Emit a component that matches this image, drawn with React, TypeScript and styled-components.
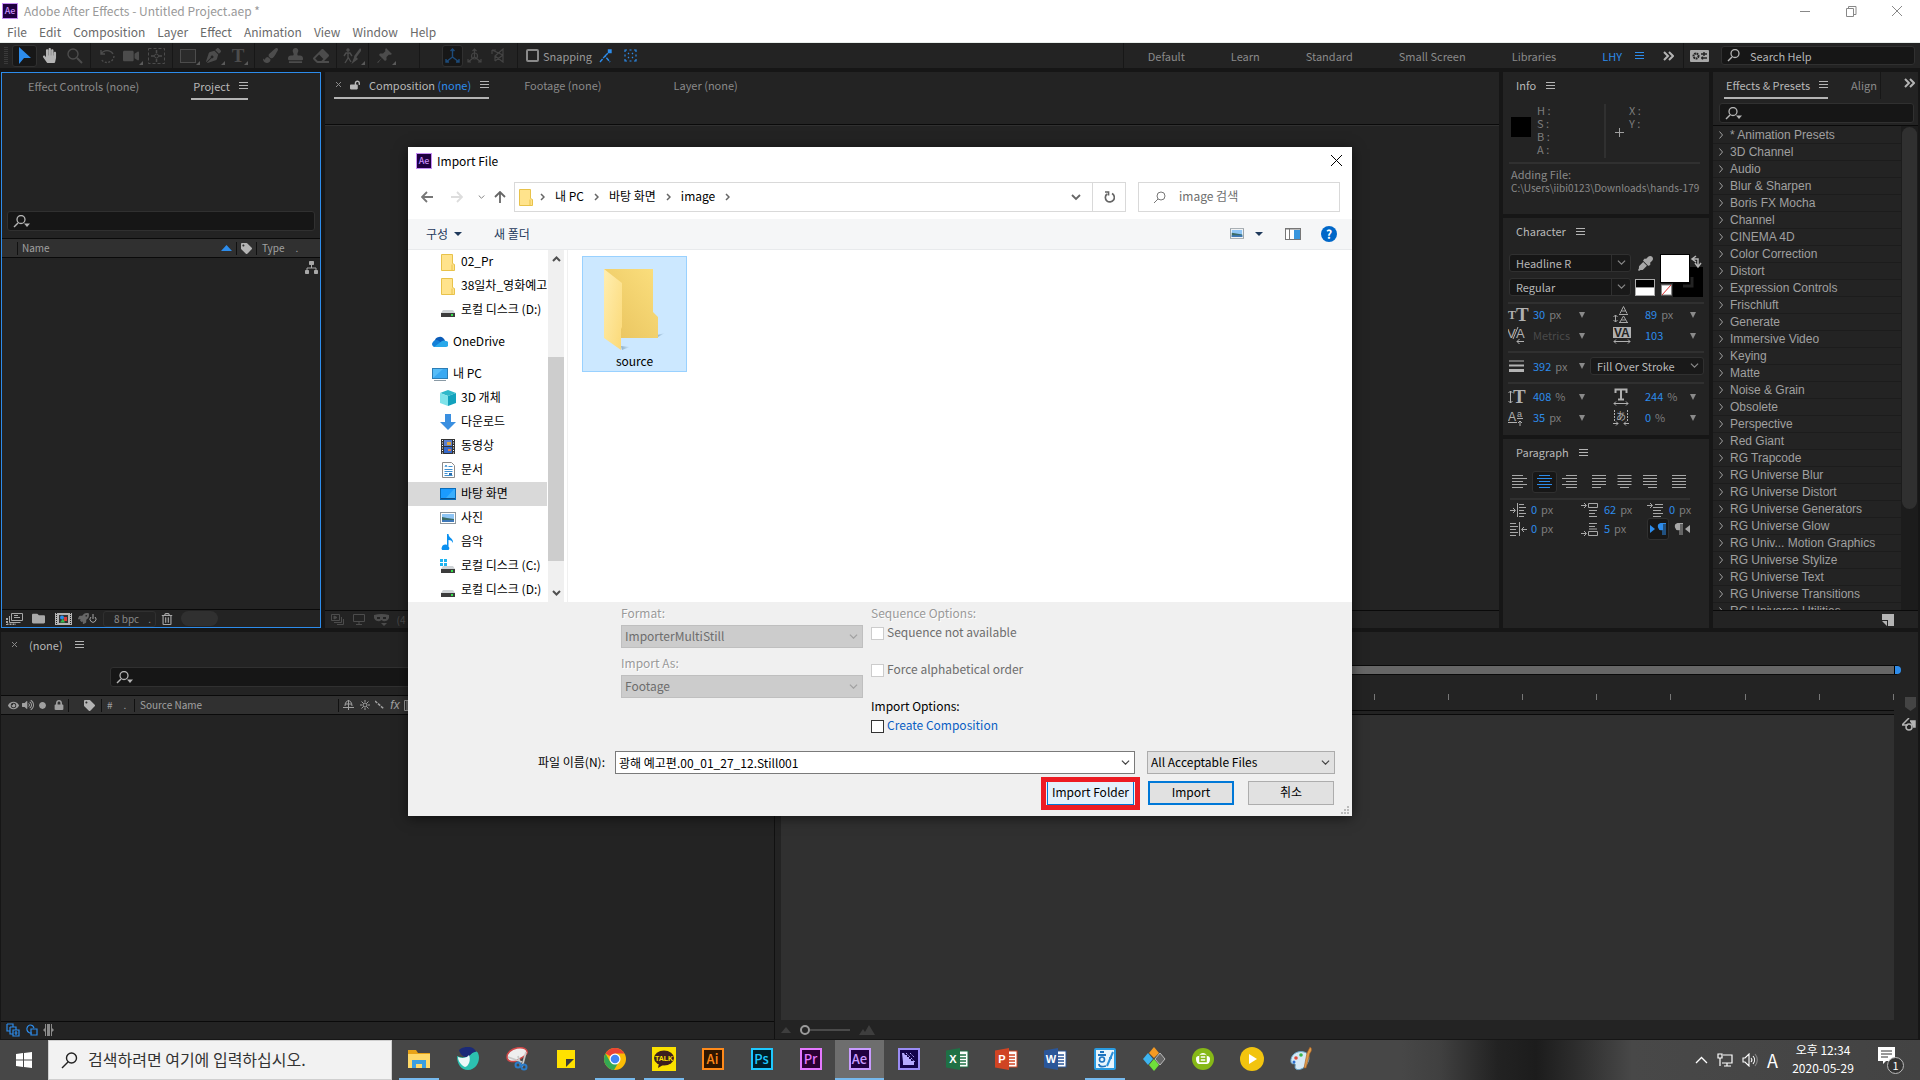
import React from "react";
import styled, { createGlobalStyle, css } from "styled-components";
import {
  FaHandPaper, FaPenNib, FaPaintBrush, FaStamp, FaEraser, FaTag,
  FaRegTrashAlt, FaEyeDropper, FaVideo, FaFolder, FaRocket, FaEye, FaVolumeUp, FaLock, FaLockOpen, FaCircle,
} from "react-icons/fa";

const UI = `"Noto Sans CJK KR", "Noto Sans", sans-serif`;
const BLUE = "#2d8ceb";

const Global = createGlobalStyle`
  *, *::before, *::after { box-sizing: border-box; }
  body { margin: 0; background: #161616; font-family: ${UI}; font-size: 12px; line-height: 16px; color: #999; overflow: hidden; }
  button, input, select { font: inherit; color: inherit; margin: 0; padding: 0; border: 0; background: none; border-radius: 0; }
  button { cursor: default; white-space: nowrap; }
  input, select { appearance: none; outline: none; min-width: 0; }
  ul { list-style: none; margin: 0; padding: 0; }
  svg { display: block; flex: none; }
  a { color: inherit; text-decoration: none; }
`;

/* ---------- shared pieces ---------- */

const Desktop = styled.div`
  height: 100vh;
  display: flex;
  flex-direction: column;
  position: relative;
`;
const Spacer = styled.div`flex: 1;`;

type SvgProps = { w: number; h: number; children: React.ReactNode; c?: string; sw?: number };
const Line = ({ w, h, children, c = "currentColor", sw = 1 }: SvgProps) => (
  <svg width={w} height={h} viewBox={`0 0 ${w} ${h}`} fill="none" stroke={c} strokeWidth={sw}>{children}</svg>
);
const Burger = ({ c = "#b4b4b4" }: { c?: string }) => (
  <Line w={9} h={9} c={c}><path d="M0 1.500h9M0 4.500h9M0 7.500h9" /></Line>
);
const Chevrons = () => <Line w={11} h={10} c="#b4b4b4" sw={2}><path d="M1 1l4 4-4 4M6 1l4 4-4 4" /></Line>;
const SearchGlyph = ({ menu }: { menu?: boolean }) => (
  <Line w={18} h={13} c="#b4b4b4" sw={1}>
    <circle cx="8" cy="4.500" r="4" strokeWidth="1.300" /><path d="M5 8L1 12" strokeWidth="1.500" />
    {menu && <path d="M11 8.500h6l-3 3.500z" fill="#b4b4b4" stroke="none" />}
  </Line>
);
const Chevron = ({ c, size = 9 }: { c: string; size?: number }) => (
  <svg width={size} height={size * 0.6} viewBox="0 0 10 6" fill="none" stroke={c} strokeWidth="1.300"><path d="M1 .7l4 4 4-4" /></svg>
);
const Badge = styled.span<{ $size: number; $bg: string; $fg: string }>`
  width: ${p => p.$size}px;
  height: ${p => p.$size}px;
  flex: none;
  display: inline-flex;
  align-items: center;
  justify-content: center;
  background: ${p => p.$bg};
  color: ${p => p.$fg};
  border: ${p => (p.$size > 18 ? 2 : 1)}px solid ${p => p.$fg};
  font-size: ${p => (p.$size > 18 ? 13 : 9)}px;
  font-weight: 500;
  line-height: 1;
  padding-bottom: 1px;
`;
const AeLogo = ({ size }: { size: number }) => (
  <Badge $size={size} $bg="#1f0040" $fg="#c68cf5">Ae</Badge>
);

/* ---------- title and menu bars ---------- */

const WindowHead = styled.header`
  height: 43px;
  flex: none;
  background: #fff;
  border-bottom: 1px solid #e8eeeb;
  color: #999;
`;
const TitleBar = styled.div`
  height: 22px;
  display: flex;
  align-items: center;
  gap: 6px;
  padding-left: 2px;
`;
const WindowButtons = styled.div`
  display: flex;
  button { width: 46px; height: 22px; display: flex; align-items: center; justify-content: center; }
`;
const MenuBar = styled.nav`
  height: 20px;
  display: flex;
  align-items: center;
  gap: 12px;
  padding: 0 0 0 7px;
  color: #6a6a6a;
`;

/* ---------- toolbar ---------- */

const Toolbar = styled.div`
  height: 25px;
  flex: none;
  margin-bottom: 4px;
  background: #232323;
  display: flex;
  align-items: center;
`;
const Grip = styled.div`
  width: 4px;
  height: 18px;
  margin: 0 4px;
  background: repeating-linear-gradient(#3a3a3a 0 1px, transparent 1px 2px);
`;
const Tool = styled.button<{ $on?: boolean; $w?: number; $c?: string; $flyout?: boolean }>`
  width: ${p => p.$w ?? 25}px;
  height: 22px;
  flex: none;
  display: flex;
  align-items: center;
  justify-content: center;
  color: ${p => p.$c ?? "#4c4c4c"};
  ${p => p.$on && css`background: #171717; border: 1px solid #303030; border-radius: 3px;`}
  ${p => p.$flyout && css`
    &::after { content: ""; align-self: flex-end; margin: 0 -3px 2px 0; border: 2px solid transparent; border-right-color: #5a5a5a; border-bottom-color: #5a5a5a; }
  `}
`;
const Sep = styled.div<{ $gap?: number }>`
  width: 1px;
  align-self: stretch;
  margin: 0 ${p => p.$gap ?? 3}px;
  background: #171717;
`;
const Check = styled.label<{ $c?: string }>`
  display: inline-flex;
  align-items: center;
  gap: 3px;
  color: ${p => p.$c ?? "#999"};
`;
const SnapCheck = styled(Check)`
  font-size: 11px;
  gap: 4px;
`;
const DarkBox = styled.input`
  width: 13px;
  height: 13px;
  border: 2px solid #8a8a8a;
  border-radius: 2px;
`;
const Workspaces = styled.nav`
  display: flex;
  align-items: center;
  gap: 46px;
  font-size: 11px;
  padding-left: 24px;
  color: #8a8a8a;
  button:last-child { color: ${BLUE}; display: flex; align-items: center; gap: 13px; }
`;
const SearchField = styled.label<{ $m?: string; $h?: number }>`
  display: flex;
  align-items: center;
  gap: 5px;
  height: ${p => p.$h ?? 20}px;
  margin: ${p => p.$m ?? "0"};
  padding-left: 5px;
  background: #161616;
  border: 1px solid #303030;
  border-radius: 3px;
  font-size: 11px;
  input { flex: 1; }
  input::placeholder { color: #b4b4b4; opacity: 1; }
`;
const HelpSearch = styled.div`
  width: 194px;
  margin: 0 5px 0 6px;
`;

/* ---------- panels ---------- */

const Upper = styled.main`
  flex: 556 1 0;
  min-height: 0;
  display: flex;
  gap: 4px;
  padding: 0 2px 0 1px;
`;
const Panel = styled.section<{ $focus?: boolean }>`
  background: #232323;
  display: flex;
  flex-direction: column;
  min-width: 0;
  min-height: 0;
  overflow: hidden;
  ${p => p.$focus && css`border: 1px solid ${BLUE};`}
`;
const ProjectPanel = styled(Panel)`width: 320px; flex: none;`;
const CompPanel = styled(Panel)`flex: 1;`;
const MidColumn = styled.div`
  width: 206px;
  flex: none;
  display: flex;
  flex-direction: column;
  gap: 4px;
`;
const EffectsPanel = styled(Panel)`width: 205px; flex: none;`;

const Tabs = styled.div<{ $pad?: number }>`
  height: 27px;
  flex: none;
  margin-bottom: 1px;
  display: flex;
  align-items: stretch;
  padding-left: ${p => p.$pad ?? 0}px;
`;
const Tab = styled.button<{ $on?: boolean; $ml?: number; $gap?: number }>`
  display: flex;
  align-items: center;
  gap: ${p => p.$gap ?? 9}px;
  padding: 0 0 0 2px;
  margin-left: ${p => p.$ml ?? 0}px;
  color: ${p => (p.$on ? "#b8b8b8" : "#8a8a8a")};
  border-bottom: 2px solid ${p => (p.$on ? "#b4b4b4" : "transparent")};
  font-size: 11px;
  em { font-style: normal; color: ${BLUE}; }
`;
const LightText = styled.span`
  color: #b8b8b8;
`;
const PanelTitle = styled.h2`
  height: 28px;
  flex: none;
  margin: 0;
  padding: 0 0 2px 13px;
  display: flex;
  align-items: center;
  gap: 10px;
  font-size: 11px;
  font-weight: 400;
  color: #b8b8b8;
`;
const HeaderRow = styled.div`
  height: 20px;
  flex: none;
  display: flex;
  align-items: center;
  background: #303030;
  border: solid #0a0a0a;
  border-width: 1px 0;
  font-size: 10px;
  color: #a0a0a0;
`;
const Cell = styled.span<{ $w?: number; $grow?: boolean; $pad?: number; $line?: boolean; $c?: string }>`
  width: ${p => (p.$w ? `${p.$w}px` : "auto")};
  ${p => p.$grow && "flex: 1;"}
  height: 13px;
  display: flex;
  align-items: center;
  justify-content: ${p => (p.$pad === undefined ? "center" : "flex-start")};
  gap: 11px;
  padding-left: ${p => p.$pad ?? 0}px;
  border-left: 1px solid ${p => (p.$line ? "#111" : "transparent")};
  color: ${p => p.$c ?? "inherit"};
`;
const BottomBar = styled.div`
  height: 18px;
  flex: none;
  margin-top: auto;
  display: flex;
  align-items: center;
  border-top: 1px solid #0a0a0a;
  color: #a8a8a8;
  font-size: 10px;
`;
const Bpc = styled.button`
  width: 53px;
  height: 16px;
  margin: 0 5px 0 4px;
  display: flex;
  align-items: center;
  justify-content: flex-end;
  gap: 9px;
  padding-right: 4px;
  border: 1px solid #303030;
  border-radius: 3px;
  color: #8a8a8a;
`;
const Pill = styled.div`
  width: 37px;
  height: 15px;
  margin-left: 8px;
  border-radius: 8px;
  background: #303030;
`;
const FlowButton = styled.div`
  display: flex;
  justify-content: flex-end;
  padding: 3px 2px;
  color: #a8a8a8;
`;
const Rule = styled.hr<{ $m: string }>`
  flex: none;
  width: auto;
  height: 2px;
  border: 0;
  margin: ${p => p.$m};
  background: #303030;
`;
const CompRule = styled(Rule)`
  background: #303030;
  border-top: 1px solid #0a0a0a;
`;

/* info */
const InfoPanel = styled(Panel)`height: 142px; flex: none;`;
const InfoGrid = styled.div`
  display: grid;
  grid-template-columns: 20px 75px 17px 1fr;
  padding: 4px 0 0 8px;
  height: 62px;
  line-height: 13px;
  flex: none;
  color: #7d7d7d;
  font-size: 11px;
`;
const Swatch = styled.div`
  width: 20px;
  height: 20px;
  margin-top: 13px;
  background: #000;
`;
const Readout = styled.div<{ $line?: boolean; $pad: number }>`
  height: 54px;
  white-space: pre-line;
  padding-left: ${p => p.$pad}px;
  ${p => p.$line && "border-right: 2px solid #303030;"}
`;
const InfoText = styled.p<{ $path?: boolean }>`
  margin: 0 0 0 8px;
  line-height: 14px;
  font-size: ${p => (p.$path ? 10 : 11)}px;
  white-space: nowrap;
  color: #8a8a8a;
`;

/* character */
const CharPanel = styled(Panel)`height: 217px; flex: none;`;
const ParaPanel = styled(Panel)`flex: 1;`;
const FontArea = styled.div`
  display: grid;
  grid-template-columns: 122px 25px 1fr;
  grid-template-rows: 18px 18px;
  gap: 6px 2px;
  padding: 8px 6px 0;
  flex: none;
  align-items: center;
`;
const SelectWrap = styled.span<{ $dark?: boolean; $disabled?: boolean; $split?: boolean }>`
  display: grid;
  grid-template-columns: 1fr 18px;
  align-items: center;
  min-width: 0;
  height: ${p => (p.$dark ? 18 : 23)}px;
  border: 1px solid ${p => (p.$dark ? "#303030" : p.$disabled ? "#bfbfbf" : "#acacac")};
  border-radius: ${p => (p.$dark ? 3 : 0)}px;
  background: ${p => (p.$dark ? "#191919" : p.$disabled ? "#ccc" : "#e1e1e1")};
  color: ${p => (p.$dark ? "#b8b8b8" : p.$disabled ? "#6d6d6d" : "#000")};
  font-size: ${p => (p.$dark ? 11 : 12)}px;
  select { grid-area: 1 / 1 / 2 / 3; padding-left: ${p => (p.$dark ? 6 : 3)}px; height: 100%; opacity: 1; }
  svg { grid-area: 1 / 2 / 2 / 3; justify-self: center; pointer-events: none; }
  ${p => p.$split && "background: linear-gradient(90deg, #161616 calc(100% - 19px), #303030 0 calc(100% - 18px), #191919 0);"}
`;
const Pick = ({ label, value, dark, disabled, split, id }: { label: string; value: string; dark?: boolean; disabled?: boolean; split?: boolean; id?: string }) => (
  <SelectWrap $dark={dark} $disabled={disabled} $split={split}>
    <select id={id} aria-label={id ? undefined : label} disabled={disabled} defaultValue={value}><option>{value}</option></select>
    <Chevron c={dark ? "#8a8a8a" : disabled ? "#a0a0a0" : "#444"} />
  </SelectWrap>
);
const Params = styled.div`
  display: grid;
  grid-template-columns: 25px 44px 36px 32px 43px 1fr;
  grid-auto-rows: 21px;
  align-items: center;
  padding-left: 5px;
  flex: none;
  font-size: 11px;
  color: #b0b0b0;
`;
const Value = styled.span<{ $dim?: boolean }>`
  color: ${p => (p.$dim ? "#4a4a4a" : BLUE)};
  white-space: nowrap;
  padding-bottom: 1px;
  small { font-size: 11px; color: #7d7d7d; margin-left: 4px; }
`;
const Down = styled.span<{ $menu?: boolean }>`
  width: 0;
  border: 3px solid transparent;
  border-top: 6px solid #8a8a8a;
  border-bottom: 0;
  margin-left: 2px;
  ${p => p.$menu && "border-width: 4px 4px 0; border-top-color: #1e395b; margin-left: 6px;"}
`;
const StrokeRow = styled(Params)`
  grid-template-columns: 25px 44px 13px 114px;
  grid-auto-rows: 26px;
`;
const AlignRow = styled.div`
  display: flex;
  padding: 4px 0 0 4px;
  height: 28px;
  flex: none;
`;
const AlignGap = styled.span`width: 5px;`;
const ParaGrid = styled.div`
  display: grid;
  grid-template-columns: 21px 50px 23px 43px 22px 1fr;
  grid-auto-rows: 19px;
  align-items: center;
  padding-left: 7px;
  flex: none;
  font-size: 11px;
  color: #b0b0b0;
`;
const DirButtons = styled.div`
  grid-column: 5 / 7;
  display: flex;
  align-items: flex-start;
`;

/* effects list */
const ListArea = styled.div`
  flex: 1;
  min-height: 0;
  display: flex;
  border-top: 1px solid #0a0a0a;
`;
const EffectList = styled.ul`
  flex: 1;
  overflow: hidden;
  padding-top: 1px;
  font-family: "Liberation Sans", Arial, sans-serif;
  color: #a0a0a0;
  li { height: 17px; line-height: 19px; padding-left: 6px; display: flex; align-items: center; gap: 7px; border-bottom: 1px solid #1c1c1c; white-space: nowrap; }
`;
const Scroll = styled.div`
  width: 17px;
  background: #1c1c1c;
  padding: 1px 1px 0;
  &::before { content: ""; display: block; height: 79%; border-radius: 8px; background: #303030; }
`;

/* timeline */
const Timeline = styled.section`
  flex: 407 1 0;
  min-height: 0;
  margin: 4px 2px 1px 1px;
  background: #232323;
  display: grid;
  grid-template-columns: 774px 1fr 24px;
`;
const TimeLeft = styled.div`
  display: flex;
  flex-direction: column;
  border-right: 1px solid #111;
`;
const TimeRight = styled.div`
  display: flex;
  flex-direction: column;
  padding-left: 6px;
`;
const WorkBar = styled.div`
  height: 10px;
  flex: none;
  margin: 33px -7px 0 0;
  border: solid #0a0a0a;
  border-width: 1px 0;
  background: #666;
  display: flex;
  justify-content: flex-end;
  border-radius: 0 5px 5px 0;
  &::after { content: ""; width: 7px; background: ${BLUE}; border-left: 1px solid #000; border-radius: 0 5px 5px 0; }
`;
const Ruler = styled.div`
  height: 36px;
  flex: none;
  display: flex;
  align-items: flex-end;
  padding-bottom: 10px;
  border-bottom: 1px solid #0a0a0a;
  span { flex: 1; height: 6px; border-right: 1px solid #777; }
`;
const TrackArea = styled.div`
  flex: 1;
  margin: 3px 0 19px;
  border-top: 1px solid #0a0a0a;
  background: #303030;
`;
const TimeGutter = styled.div`
  padding: 65px 2px 0 7px;
  display: flex;
  flex-direction: column;
  align-items: flex-end;
  gap: 7px;
`;
const StatusIcons = styled.div`
  height: 19px;
  padding: 0 0 2px 4px;
  display: flex;
  align-items: center;
  gap: 4px;
  color: ${BLUE};
`;
const ZoomRow = styled.div`
  height: 19px;
  margin-top: -19px;
  display: flex;
  align-items: center;
  gap: 9px;
  color: #3e3e3e;
  input { width: 50px; height: 10px; background: linear-gradient(#4a4a4a, #4a4a4a) center / 100% 2px no-repeat; }
  input::-webkit-slider-thumb { appearance: none; width: 10px; height: 10px; border-radius: 5px; border: 2px solid #9a9a9a; background: #232323; }
`;

/* ---------- import dialog ---------- */

const Dialog = styled.div`
  position: absolute;
  left: 408px;
  top: 147px;
  width: 944px;
  height: 669px;
  display: flex;
  flex-direction: column;
  background: #fff;
  color: #000;
  box-shadow: 0 2px 12px rgba(0, 0, 0, 0.55);
`;
const DTitle = styled.div`
  height: 35px;
  flex: none;
  display: flex;
  align-items: center;
  gap: 5px;
  padding: 0 5px 8px 8px;
  button { width: 16px; height: 16px; }
`;
const NavRow = styled.div`
  height: 30px;
  flex: none;
  display: flex;
  margin: 0 12px 7px 10px;
`;
const NavButton = styled.button<{ $w: number }>`
  width: ${p => p.$w}px;
  display: flex;
  align-items: center;
  justify-content: center;
`;
const Address = styled.div`
  flex: 1;
  display: flex;
  align-items: center;
  border: 1px solid #d9d9d9;
  padding-left: 4px;
`;
const Crumbs = styled.nav`
  display: flex;
  align-items: center;
  gap: 10px;
  margin-left: 7px;
  a { padding-bottom: 2px; }
`;
const AddrButton = styled.button<{ $line?: boolean }>`
  width: 33px;
  height: 100%;
  display: flex;
  align-items: center;
  justify-content: center;
  border-left: 1px solid ${p => (p.$line ? "#d9d9d9" : "transparent")};
`;
const FileSearch = styled.label`
  width: 202px;
  margin-left: 12px;
  display: flex;
  align-items: center;
  gap: 13px;
  padding-left: 14px;
  border: 1px solid #d9d9d9;
  input { flex: 1; padding-bottom: 2px; }
  input::placeholder { color: #6d6d6d; opacity: 1; }
`;
const Commands = styled.div`
  height: 31px;
  flex: none;
  display: flex;
  align-items: center;
  padding: 0 15px 1px 18px;
  background: #f5f6f7;
  border-bottom: 1px solid #e8eaec;
  color: #1e395b;
  button { display: flex; align-items: center; }
`;
const Body = styled.div`
  flex: 1;
  min-height: 0;
  display: flex;
`;
const Tree = styled.ul`
  width: 139px;
  overflow: hidden;
`;
const Node = styled.li<{ $lvl: number; $on?: boolean; $gap?: boolean }>`
  height: 24px;
  margin-top: ${p => (p.$gap ? 8 : 0)}px;
  padding: 0 0 2px ${p => (p.$lvl ? 32 : 24)}px;
  display: flex;
  align-items: center;
  gap: 5px;
  white-space: nowrap;
  background: ${p => (p.$on ? "#d9d9d9" : "none")};
  svg { margin-top: 2px; }
`;
const NodeIcon = styled.span`
  min-width: 16px;
  display: flex;
  justify-content: center;
`;
const TreeScroll = styled.div`
  width: 17px;
  margin-left: 1px;
  background: #f0f0f0;
  display: flex;
  flex-direction: column;
  align-items: center;
  padding: 6px 0;
  border-right: 1px solid #fff;
`;
const TreeThumb = styled.div`
  width: 16px;
  height: 204px;
  margin: 95px 0 auto;
  background: #cdcdcd;
`;
const Files = styled.div`
  flex: 1;
  margin-left: 2px;
  border-left: 1px solid #f0f0f0;
  padding: 6px 0 0 14px;
`;
const FileTile = styled.button`
  width: 105px;
  height: 116px;
  background: #cce8ff;
  border: 1px solid #99d1ff;
  display: flex;
  flex-direction: column;
  align-items: center;
  justify-content: flex-end;
  gap: 1px;
  padding-bottom: 2px;
`;
const Foot = styled.div`
  height: 214px;
  flex: none;
  background: #f0f0f0;
  display: flex;
  flex-direction: column;
`;
const Options = styled.div`
  height: 149px;
  display: flex;
  gap: 8px;
  padding: 3px 0 0 213px;
`;
const FieldCol = styled.div`
  width: 242px;
  display: flex;
  flex-direction: column;
  label { color: #9a9a9a; text-shadow: 1px 1px #fff; line-height: 16px; margin-bottom: 4px; }
  span { margin-bottom: 7px; }
  select { padding-bottom: 2px; }
`;
const CheckCol = styled.div`
  flex: 1;
  display: flex;
  flex-direction: column;
  align-items: flex-start;
`;
const Heading = styled.div<{ $dim?: boolean; $mt?: number }>`
  margin-top: ${p => p.$mt ?? 0}px;
  color: ${p => (p.$dim ? "#9a9a9a" : "#000")};
  text-shadow: ${p => (p.$dim ? "1px 1px #fff" : "none")};
  line-height: 16px;
`;
const Option = styled(Check)<{ $mt: number }>`
  margin-top: ${p => p.$mt}px;
  height: 16px;
  span { padding-bottom: 2px; }
`;
const LightBox = styled.input`
  width: 13px;
  height: 13px;
  border: 1px solid #333;
  background: #fff;
  &:disabled { border-color: #ccc; }
`;
const NameRow = styled.div`
  display: flex;
  align-items: center;
  padding: 0 17px 0 130px;
  height: 23px;
  label { width: 77px; padding-bottom: 1px; }
`;
const Combo = styled.div`
  flex: 1;
  height: 23px;
  display: flex;
  align-items: center;
  border: 1px solid #7a7a7a;
  background: #fff;
  padding: 0 4px 0 3px;
  input { flex: 1; }
`;
const TypeSlot = styled.div`
  width: 188px;
  margin-left: 12px;
  display: grid;
  select { padding-bottom: 2px; }
`;
const Actions = styled.div`
  flex: 1;
  display: flex;
  justify-content: flex-end;
  align-items: flex-start;
  padding: 3px 18px 0 0;
`;
const Push = styled.button<{ $main?: boolean; $hot?: boolean; $ml?: number }>`
  width: ${p => (p.$hot ? 87 : 86)}px;
  height: 24px;
  margin: 4px 0 0 ${p => p.$ml ?? 0}px;
  padding-bottom: 2px;
  border: ${p => (p.$main ? 2 : 1)}px solid ${p => (p.$main || p.$hot ? "#0078d7" : "#adadad")};
  background: ${p => (p.$hot ? "#e5f1fb" : "#e1e1e1")};
`;
const RedFrame = styled.div`
  border: 5px solid #ed1c24;
  height: 33px;
  padding: 0 1px;
  display: flex;
  ${Push} { height: 23px; margin: 0; border-width: 0 1px 1px; }
`;
const SizeGrip = styled.div`
  position: absolute;
  right: 3px;
  bottom: 2px;
`;

/* ---------- taskbar ---------- */

const Taskbar = styled.footer`
  height: 40px;
  flex: none;
  display: flex;
  align-items: stretch;
  color: #fff;
  background: linear-gradient(90deg, #474747 0 73%, #404040 75%, #222 78%, #1c1c1c 80%, #2c2c2c 82%, #484848 85%, #434343);
`;
const Start = styled.button`
  width: 48px;
  display: flex;
  align-items: center;
  justify-content: center;
`;
const TaskSearch = styled.label`
  width: 344px;
  display: flex;
  align-items: center;
  gap: 10px;
  padding-left: 12px;
  background: #f2f2f2;
  border: 1px solid #cfcfcf;
  color: #222;
  input { flex: 1; font-size: 16px; height: 26px; padding-bottom: 2px; }
  input::placeholder { color: #333; opacity: 1; }
`;
const Task = styled.button<{ $open?: boolean; $active?: boolean }>`
  width: 49px;
  display: flex;
  align-items: center;
  justify-content: center;
  padding-bottom: 2px;
  background: ${p => (p.$active ? "#6e6e6e" : p.$open ? "linear-gradient(#76b9ed, #76b9ed) center bottom / 40px 2px no-repeat" : "none")};
  box-shadow: ${p => (p.$active ? "inset 0 -2px #76b9ed" : "none")};
`;
const Tasks = styled.div`
  display: flex;
  padding-left: 2px;
`;
const Tray = styled.div`
  display: flex;
  align-items: center;
  gap: 9px;
`;
const Clock = styled.div`
  width: 72px;
  text-align: center;
  line-height: 18px;
  font-size: 12px;
  padding-bottom: 2px;
`;
const Letter = styled.span`
  font-size: 18px;
  line-height: 20px;
`;
const Notice = styled.div`
  display: flex;
  align-items: flex-start;
  width: 30px;
  margin-right: 12px;
  svg + span { margin: 10px 0 0 -8px; }
  span { flex: none; width: 17px; height: 17px; border-radius: 9px; border: 1px solid #bbb; background: #333; font-size: 11px; line-height: 14px; text-align: center; }
`;

/* ---------- drawings ---------- */

const FolderSmall = () => (
  <svg width="14" height="17" viewBox="0 0 14 17"><path d="M.5.5h11v9l2 1v6H.5z" fill="#ffe38c" stroke="#e8c24a" /><path d="M11 10.500v5.500" stroke="#e8c24a" /></svg>
);
const Drive = ({ win }: { win?: boolean }) => (
  <svg width="16" height="16" viewBox="0 0 16 16">
    <path d="M3 8h10l2 3H1z" fill="#cfd3d6" /><path d="M1 11h14v4H1z" fill="#3c3c3c" /><path d="M11 12h2v2h-2z" fill="#35e04a" />
    {win && <path d="M0 1h3v3H0zM4 1h3v3H4zM0 5h3v3H0zM4 5h3v3H4z" fill="#1fb4f0" />}
  </svg>
);
const Picture = ({ w = 16, h = 12 }: { w?: number; h?: number }) => (
  <svg width={w} height={h} viewBox="0 0 16 12"><rect x=".5" y=".5" width="15" height="11" fill="#fff" stroke="#8f989e" /><rect x="2" y="2" width="12" height="8" fill="#8ec5f5" /><path d="M2 5l5 1 7 1v3H2z" fill="#3b6b66" /><path d="M2 8h12v2H2z" fill="#3e78b8" /></svg>
);
const treeIcons: Record<string, React.ReactNode> = {
  folder: <FolderSmall />,
  drive: <Drive />,
  win: <Drive win />,
  cloud: <svg width="16" height="12" viewBox="0 0 16 12"><path d="M3 6a4 4 0 014-5 5 5 0 016 4l-4 4z" fill="#0a5cb8" /><path d="M2 11a3 3 0 01-1-5 4 4 0 016-1l6 5z" fill="#1480d8" /><path d="M2 11l8-6a4 4 0 014 0 3 3 0 01-1 6z" fill="#28a8ea" /></svg>,
  pc: <svg width="16" height="13" viewBox="0 0 16 13"><rect x=".5" y=".5" width="15" height="10" fill="#57bdf8" stroke="#2c7db5" /><path d="M1 10L11 1h4v9z" fill="#3aa9f2" /><path d="M2 12.500h12" stroke="#8a9aa5" /></svg>,
  cube: <svg width="16" height="16" viewBox="0 0 16 16"><path d="M8 0l8 3-8 3-8-3z" fill="#2fb8c9" /><path d="M0 3l8 3v10l-8-3z" fill="#7fe3ea" /><path d="M16 3L8 6v10l8-3z" fill="#12a2bd" /></svg>,
  down: <svg width="16" height="16" viewBox="0 0 16 16"><path d="M5 0h6v8h5l-8 8-8-8h5z" fill="#3a8fe0" /></svg>,
  film: <svg width="14" height="15" viewBox="0 0 14 15"><path d="M0 0h14v15H0z" fill="#333" /><path d="M3 1h8v6H3z" fill="#5a7fd0" /><path d="M3 8h8v6H3z" fill="#3568c8" /><path d="M6 3h4v3H6z" fill="#d9a441" /><path d="M7 10h3v2H7z" fill="#e08040" /><path d="M1.500 1v14M12.500 1v14" stroke="#fff" strokeDasharray="1 1.500" /></svg>,
  doc: <svg width="13" height="16" viewBox="0 0 13 16"><path d="M.5.5h9l3 3v12H.5z" fill="#fff" stroke="#8a8a8a" /><path d="M6.500 4.500h4M2.500 7.500h8M2.500 9.500h8M2.500 11.500h3M2.500 13.500h8M3 5l1-2 1 2" stroke="#3d8fd0" fill="none" /><path d="M7 11h3v2H7z" fill="#2a6ba8" /></svg>,
  desk: <svg width="16" height="12" viewBox="0 0 16 12"><rect x=".5" y=".5" width="15" height="11" fill="#1a9bff" stroke="#0a6cb8" /><path d="M6 10L14 1h1v9z" fill="#39aefc" /><path d="M1 10.500h14" stroke="#0b4f8a" /></svg>,
  pic: <Picture />,
  note: <svg width="14" height="16" viewBox="0 0 14 16"><path d="M6 0h1.500c0 4 5 4 4.500 9-1-2-2-3-4.500-3v6.500A3.800 3 0 111 13c0-2 3-3 5-2z" fill="#0a90f0" /></svg>,
};
const tree: [string, string, number, boolean?, boolean?][] = [
  ["folder", "02_Pr", 1], ["folder", "38일차_영화예고", 1], ["drive", "로컬 디스크 (D:)", 1],
  ["cloud", "OneDrive", 0, true], ["pc", "내 PC", 0, true], ["cube", "3D 개체", 1], ["down", "다운로드", 1],
  ["film", "동영상", 1], ["doc", "문서", 1], ["desk", "바탕 화면", 1, false, true], ["pic", "사진", 1],
  ["note", "음악", 1], ["win", "로컬 디스크 (C:)", 1], ["drive", "로컬 디스크 (D:)", 1],
];
const effects = ["* Animation Presets", "3D Channel", "Audio", "Blur & Sharpen", "Boris FX Mocha", "Channel", "CINEMA 4D",
  "Color Correction", "Distort", "Expression Controls", "Frischluft", "Generate", "Immersive Video", "Keying", "Matte",
  "Noise & Grain", "Obsolete", "Perspective", "Red Giant", "RG Trapcode", "RG Universe Blur", "RG Universe Distort",
  "RG Universe Generators", "RG Universe Glow", "RG Univ... Motion Graphics", "RG Universe Stylize", "RG Universe Text",
  "RG Universe Transitions", "RG Universe Utilities"];

const CrumbArrow = () => <Line w={5} h={8} c="#666" sw={1.5}><path d="M1 1l3 3-3 3" /></Line>;
const NavArrow = ({ c, up }: { c: string; up?: boolean }) => (
  <Line w={12} h={12} c={c} sw={1.8}>{up ? <path d="M6 12V1M1 6l5-5 5 5" /> : <path d="M12 6H1M6 1L1 6l5 5" />}</Line>
);
const NavArrowRight = () => <Line w={12} h={12} c="#ddd" sw={1.8}><path d="M0 6h11M6 1l5 5-5 5" /></Line>;
const X = ({ c, s = 10, sw = 1 }: { c: string; s?: number; sw?: number }) => <svg width={s} height={s} viewBox={`0 0 ${s} ${s}`} stroke={c} strokeWidth={sw}><path d={`M0 0L${s} ${s}M${s} 0L0 ${s}`} /></svg>;

const LetterT = styled.b<{ $s: number }>`
  font-family: "Liberation Serif", serif;
  font-size: ${p => p.$s}px;
  line-height: 18px;
`;
const LetterFx = styled.i`
  font-family: "Liberation Sans", sans-serif;
  font-size: 12px;
  line-height: 13px;
`;
const IconSlot = styled.span<{ $pad?: number }>`
  display: flex;
  align-items: center;
  padding-left: ${p => p.$pad ?? 0}px;
`;
const Para = ({ kind }: { kind: string }) => {
  const k = kind[kind.length - 1];
  return (
    <Line w={16} h={14}>
      {[0, 1, 2, 3, 4].map(i => {
        const len = kind.length > 1 ? (i === 4 && k !== "j" ? 9 : 14) : i % 2 ? 15 : 11;
        const x = k === "r" ? 15 - len : k === "c" ? (15 - len) / 2 : 0;
        return <path key={i} d={`M${x} ${i * 3 + 0.5}h${len}`} />;
      })}
    </Line>
  );
};
const IndentIcon = ({ kind }: { kind: number }) => (
  <Line w={17} h={14} c="#a8a8a8">
    {kind === 0 && <path d="M7.500 0v14M9 1.500h5M9 4.500h7M9 7.500h5M9 10.500h7M9 13.500h5M0 7.500h5M3 5l2.500 2.500L3 10" />}
    {kind === 1 && <path d="M7.500.500h9v4h-9zM8 7.500h8M8 10.500h6M8 13.500h8M0 2.500h5M3 0l2.500 2.500L3 5" />}
    {kind === 2 && <path d="M8 1.500h8M6 4.500h10M6 7.500h8M6 10.500h10M6 13.500h8M0 2.500h5M3 0l2.500 2.500L3 5" />}
    {kind === 3 && <path d="M9.500 0v14M0 1.500h6M0 4.500h8M0 7.500h6M0 10.500h8M0 13.500h6M17 7.500h-5M14 5l-2.500 2.500L14 10" />}
    {kind === 4 && <path d="M7.500 9.500h9v4h-9zM8 1.500h8M8 4.500h6M8 7h8M0 11.500h5M3 9l2.500 2.500L3 14" />}
  </Line>
);
const PilcrowDir = ({ left }: { left?: boolean }) => (
  <svg width="16" height="12" viewBox="0 0 16 12" fill="currentColor">
    {left ? <path d="M3.500 0H9v1H8.500v11h-1V1h-1v11h-1V7A3.500 3.500 0 013.500 0zM16 2v8l-5-4z" /> : <path d="M0 2v8l5-4zM10.500 0H16v1h-.5v11h-1V1h-1v11h-1V7a3.500 3.500 0 01-2-7z" />}
  </svg>
);
const iconFont = { fontFamily: "Liberation Sans", fontSize: 13, fill: "#b0b0b0", stroke: "none" };
const KernIcon = () => (
  <Line w={18} h={17} c="#b0b0b0"><text x="-1" y="11" {...iconFont}>V</text><text x="8" y="11" {...iconFont}>A</text><path d="M10 0L5 12M16 14.500H9M11.500 12L9 14.500l2.500 2.500" /></Line>
);
const TrackIcon = () => (
  <Line w={18} h={17} c="#b0b0b0"><path d="M0 0h18v11H0z" fill="#b0b0b0" stroke="none" /><text x="1" y="10" {...iconFont} fontSize={12} fontWeight={700} fill="#222">VA</text><path d="M1 14.500h16M3 12.500l-2 2 2 2M15 12.500l2 2-2 2" /></Line>
);
const WideIcon = () => (
  <Line w={16} h={18} c="#b0b0b0"><path d="M2.500 5V1.500h11V5M8 1v10M5 11.500h6" strokeWidth="2" /><path d="M1 15.500h14M3 13.500l-2 2 2 2M13 13.500l2 2-2 2" /></Line>
);
const ShiftIcon = () => (
  <Line w={16} h={16} c="#b0b0b0"><text x="0" y="11" {...iconFont} fontSize={12}>A</text><text x="9" y="7" {...iconFont} fontSize={9}>a</text><path d="M0 12.500h9M9 8.500h6M12 16v-5M10 13l2-2 2 2" /></Line>
);
const TsumeIcon = () => (
  <Line w={16} h={17} c="#b0b0b0"><text x="3" y="11" fontFamily="Noto Sans CJK JP" fontSize="10" fill="#b0b0b0" stroke="none">あ</text><path d="M1.500 1v11M14.500 1v11" strokeDasharray="2 1" /><path d="M0 14.500h5M3 12.500l2 2-2 2M16 14.500h-5M13 12.500l-2 2 2 2" /></Line>
);

const FolderBig = () => (
  <svg width="62" height="84" viewBox="0 0 62 84">
    <defs>
      <linearGradient id="fb" x1="0" y1="1" x2="1" y2="0"><stop offset="0" stopColor="#e8c25c" /><stop offset="1" stopColor="#fbdf7e" /></linearGradient>
      <linearGradient id="ff" x1="0" y1="0" x2="1" y2="1"><stop offset="0" stopColor="#ffeeb0" /><stop offset="1" stopColor="#fbd977" /></linearGradient>
      <linearGradient id="sh"><stop offset="0" stopColor="#8fb0c8" /><stop offset="1" stopColor="#cce8ff" /></linearGradient>
    </defs>
    <path d="M17 78l9 1-8 3z" fill="url(#sh)" /><path d="M53 67l8-2-7 4z" fill="url(#sh)" />
    <path d="M0 1h49v43l5 5v21H9z" fill="url(#fb)" /><path d="M0 1l18 14v44l-1 2v21L0 70z" fill="url(#ff)" />
  </svg>
);
const HelpBadge = styled.span`
  width: 16px;
  height: 16px;
  border-radius: 8px;
  background: #0067c8;
  color: #fff;
  font-weight: 700;
  font-size: 12px;
  line-height: 15px;
  text-align: center;
`;
const Office = ({ c, t }: { c: string; t: string }) => (
  <svg width="23" height="22" viewBox="0 0 23 22">
    <rect x="11" y="3" width="11" height="16" fill="#fff" stroke={c} /><path d="M14 7h6M14 10h6M14 13h6M14 16h6" stroke={c} strokeWidth="1.500" />
    <path d="M0 2.500L14 0v22L0 19.500z" fill={c} />
    <text x="7" y="15" textAnchor="middle" fontFamily="Liberation Sans" fontWeight="700" fontSize="11" fill="#fff">{t}</text>
  </svg>
);
const taskItems: [string, React.ReactNode, boolean?, boolean?][] = [
  ["파일 탐색기", <svg width="22" height="20" viewBox="0 0 22 20"><path d="M0 1h8l2 3h12v15H0z" fill="#e8a317" /><path d="M0 5h22v14H0z" fill="#ffd969" /><path d="M4 19v-8h14v8h-4v-4H8v4z" fill="#3a9ee0" /></svg>, true],
  ["Whale", <svg width="24" height="24" viewBox="0 0 24 24"><path d="M1 9c4 2 9 2 13-1 3-3 6-5 8-2 3 6-1 17-10 17C5 23 1 17 1 9z" fill="#2cc0b0" /><path d="M3 3C7-1 18-2 20 5c-4-1-6 5-10 5-3 0-6-3-7-7z" fill="#1b2a78" /><path d="M2 10c4 2 9 1 11-2 2 5 0 11-4 12-4-2-7-6-7-10z" fill="#eef8f8" /></svg>],
  ["캡처 도구", <svg width="24" height="24" viewBox="0 0 24 24" fill="none"><path d="M12 1c6-1 11 1 10 5-1 3-6 5-11 8-3 1-9 1-9-4 0-4 4-8 10-9z" fill="#eee" stroke="#d04848" strokeWidth="1.500" /><path d="M3 10l14 5M13 9l3 10M21 5l-4 15" stroke="#c9c9c9" strokeWidth="1.800" /><circle cx="13" cy="18" r="2.500" stroke="#2b7cc8" strokeWidth="2" /><circle cx="19" cy="20" r="2.500" stroke="#2b7cc8" strokeWidth="2" /></svg>],
  ["스티커 메모", <svg width="18" height="18" viewBox="0 0 18 18"><path d="M0 0h18v18H0z" fill="#ffe100" /><path d="M9 17v-8h8z" fill="#3a3a3a" /></svg>],
  ["Chrome", <svg width="22" height="22" viewBox="0 0 22 22"><circle cx="11" cy="11" r="11" fill="#fbbc05" /><path d="M11 11L1.500 5.500A11 11 0 0120.500 5.500L11 5.500z" fill="#ea4335" /><path d="M1.500 5.500A11 11 0 0010 22l5-8.500-9 0z" fill="#34a853" /><circle cx="11" cy="11" r="5.500" fill="#fff" /><circle cx="11" cy="11" r="4.300" fill="#4285f4" /></svg>, true],
  ["KakaoTalk", <svg width="24" height="24" viewBox="0 0 24 24"><rect width="24" height="24" fill="#fae100" /><ellipse cx="12" cy="11" rx="10" ry="7.500" fill="#3c1e1e" /><path d="M7 16l-1 5 5-3z" fill="#3c1e1e" /><text x="12" y="14" textAnchor="middle" fontFamily="Liberation Sans" fontSize="7" fontWeight="700" fill="#fae100">TALK</text></svg>, true],
  ["Illustrator", <Badge $size={22} $bg="#2e1500" $fg="#ff8a1a">Ai</Badge>],
  ["Photoshop", <Badge $size={22} $bg="#001d26" $fg="#1ec8ff">Ps</Badge>],
  ["Premiere", <Badge $size={22} $bg="#2a0033" $fg="#e478ff">Pr</Badge>],
  ["After Effects", <Badge $size={22} $bg="#1f0040" $fg="#c99bff">Ae</Badge>, true, true],
  ["Media Encoder", <svg width="22" height="22" viewBox="0 0 22 22"><rect x="1" y="1" width="20" height="20" fill="#12034a" stroke="#9a8cf5" strokeWidth="2" /><path d="M4 5h2l1 2h2v2h2v2h2v2h3v4H5v-3z" fill="#b5aaff" /><path d="M8 5l9 9M12 5l5 5" stroke="#b5aaff" strokeDasharray="2 1.500" /></svg>],
  ["Excel", <Office c="#1e7145" t="X" />],
  ["PowerPoint", <Office c="#d04423" t="P" />],
  ["Word", <Office c="#2a5699" t="W" />],
  ["한글", <svg width="22" height="22" viewBox="0 0 22 22"><rect x="1" y="1" width="20" height="20" rx="1" fill="#e8f5fd" stroke="#2a9be0" strokeWidth="2" /><path d="M6 4h4M4 7h8" stroke="#1c74c0" strokeWidth="1.800" fill="none" /><path d="M5 16c0 3 3 3 7 2" stroke="#1c74c0" strokeWidth="1.800" fill="none" /><circle cx="8" cy="11.500" r="2.500" fill="none" stroke="#1c74c0" strokeWidth="1.600" /><path d="M19 4l-6 14M15 10h3" stroke="#2a8ed8" strokeWidth="2" /></svg>, true],
  ["Tiles", <svg width="24" height="24" viewBox="0 0 24 24"><path d="M12 0l5 6-5 5-5-5z" fill="#f59a23" /><path d="M6 6l5 6-5 6-5-6z" fill="#3db4f0" /><path d="M18 6l5 6-5 6-5-6z" fill="#666" stroke="#bbb" /><path d="M12 12l5 6-5 6-5-6z" fill="#6fe03a" /></svg>],
  ["Green", <svg width="22" height="22" viewBox="0 0 22 22"><circle cx="11" cy="11" r="11" fill="#86b817" /><path d="M4 11c0-3 2-3 3-3 1-4 7-4 8 0 2 0 3 1 3 3s-1 5-3 5H7c-2 0-3-3-3-5z" fill="#fff" /><path d="M8 7.500h6v6H8zM8 10.500h6" stroke="#86b817" fill="none" strokeWidth="1.500" /></svg>],
  ["Player", <svg width="24" height="24" viewBox="0 0 24 24"><circle cx="12" cy="12" r="12" fill="#f2c40f" /><path d="M9 7l8 5-8 5z" fill="#fff" /></svg>],
  ["그림판", <svg width="24" height="24" viewBox="0 0 24 24"><path d="M2 15C1 8 8 3 15 5c5 1 6 6 4 10-2 6-9 9-12 7-2-2 0-4-1-5s-3 1-4-2z" fill="#d5e9f5" stroke="#6aa7cc" /><circle cx="7" cy="11" r="1.800" fill="#e04a3a" /><circle cx="12" cy="8" r="1.800" fill="#3ab54a" /><circle cx="5" cy="15" r="1.500" fill="#2c6fd0" /><path d="M21 0c2 1 2 4 0 6l-4 15h-2l3-15z" fill="#e09a4a" stroke="#9a5a20" strokeWidth=".6" /></svg>],
];

const Px = ({ v, u }: { v: string; u?: string }) => <Value>{v}{u && <small>{u}</small>}</Value>;

const ColorSlot = styled.div`
  grid-area: 1 / 3 / 3 / 4;
  align-self: start;
  height: 43px;
`;

export default function App() {
  return (
    <Desktop>
      <Global />
      <WindowHead>
        <TitleBar>
          <AeLogo size={16} /><span>Adobe After Effects - Untitled Project.aep *</span>
          <Spacer />
          <WindowButtons>
            <button aria-label="Minimize"><Line w={10} h={10} c="#888"><path d="M0 5.500h10" /></Line></button>
            <button aria-label="Restore"><Line w={11} h={11} c="#888"><path d="M.5 2.500h7v8h-7zM2.500 2.500v-2h7.500v8h-2.500" /></Line></button>
            <button aria-label="Close"><X c="#888" /></button>
          </WindowButtons>
        </TitleBar>
        <MenuBar>
          {["File", "Edit", "Composition", "Layer", "Effect", "Animation", "View", "Window", "Help"].map(m => <button key={m}>{m}</button>)}
        </MenuBar>
      </WindowHead>

      <Toolbar>
        <Grip />
        <Tool $on aria-label="Selection"><svg width="13" height="17" viewBox="0 0 13 17" fill={BLUE}><path d="M1 0l12 11H6L1 17z" /></svg></Tool>
        <Tool $c="#b4b4b4" aria-label="Hand"><FaHandPaper size={15} /></Tool>
        <Tool aria-label="Zoom"><Line w={16} h={16} sw={1.4}><circle cx="6" cy="6" r="5" /><path d="M10 10l5 5" strokeWidth="2" /></Line></Tool>
        <Sep />
        <Tool aria-label="Rotate"><Line w={16} h={16} sw={1.4}><path d="M2 2v4h4M2 6a7 7 0 0112 0" /><path d="M15 8a7 7 0 01-13 3" strokeDasharray="2 1.500" /></Line></Tool>
        <Tool $flyout aria-label="Camera"><FaVideo size={16} /></Tool>
        <Tool aria-label="Pan behind"><Line w={17} h={16}><rect x=".5" y=".5" width="16" height="15" strokeDasharray="3 2" /><circle cx="8.500" cy="8" r="2" /><path d="M8.500 2v3M8.500 11v3M3 8h3M11 8h3" strokeWidth="1.500" /></Line></Tool>
        <Sep />
        <Tool $flyout aria-label="Rectangle"><Line w={16} h={14}><rect x=".5" y=".5" width="15" height="13" fill="#2b2b2b" /></Line></Tool>
        <Tool $flyout aria-label="Pen"><FaPenNib size={15} /></Tool>
        <Tool $flyout aria-label="Type"><LetterT $s={19}>T</LetterT></Tool>
        <Sep />
        <Tool aria-label="Brush"><FaPaintBrush size={15} /></Tool>
        <Tool aria-label="Stamp"><FaStamp size={15} /></Tool>
        <Tool aria-label="Eraser"><FaEraser size={16} /></Tool>
        <Sep />
        <Tool $flyout aria-label="Roto brush"><Line w={18} h={16} sw={1.4}><circle cx="5" cy="2" r="1" /><path d="M1 8l2-3h4l2 3M5 5v5l-3 5M5 9l3 5" /><path d="M18 1l-6 8" strokeWidth="2.500" /><path d="M12 9l-2 5 4-3z" fill="currentColor" /></Line></Tool>
        <Sep />
        <Tool $flyout aria-label="Puppet pin"><svg width="15" height="15" viewBox="0 0 15 15" fill="currentColor"><path d="M9 0l6 6-2 1-1-.500-2.500 2.500v3l-1.500 1-3-3-4 5-.8-.8L5 10 2 7l1-1.500h3L8.500 3 8 2z" /></svg></Tool>
        <Sep $gap={22} />
        <Tool $on $w={21} $c="#1d4b7a" aria-label="Local axis"><Line w={15} h={15} sw={1.4}><path d="M7.500 1v8L1 14M7.500 9l6.500 5M5.500 3l2-2 2 2M1 11v3h3M14 11v3h-3" /></Line></Tool>
        <Tool $w={23} $c="#444" aria-label="World axis"><Line w={15} h={15} sw={1.2}><circle cx="7.500" cy="8" r="3" /><path d="M7.500 1v8L1 14M7.500 9l6.500 5M5.500 3l2-2 2 2M1 11v3h3M14 11v3h-3" /></Line></Tool>
        <Tool $w={23} $c="#444" aria-label="View axis"><Line w={15} h={15} sw={1.2}><path d="M2 2l11 5V1L5 8v5M2 2v4M2 2h4M5 13l8-6v7L5 8" /></Line></Tool>
        <Sep $gap={8} />
        <SnapCheck><DarkBox type="checkbox" /><span>Snapping</span></SnapCheck>
        <Tool $w={27} $c={BLUE} aria-label="Snap edges"><Line w={13} h={14} sw={1.4}><path d="M1 13l5-6 5 6M6 7l5-5" strokeDasharray="4 1" /><path d="M9.500 1h2.500v2.500h-2.500z" fill={BLUE} /></Line></Tool>
        <Tool $w={22} $c={BLUE} aria-label="Snap features"><Line w={13} h={13} sw={1.2}><path d="M1 3V1h2M10 1h2v2M12 10v2h-2M3 12H1v-2M4 4l1 1M9 4L8 5M4 9l1-1M9 9L8 8M5.500 1h2M5.500 12h2M1 5.500v2M12 5.500v2" /></Line></Tool>
        <Spacer />
        <Sep $gap={0} />
        <Workspaces>
          {["Default", "Learn", "Standard", "Small Screen", "Libraries"].map(w => <button key={w}>{w}</button>)}
          <button>LHY <Burger c={BLUE} /></button>
        </Workspaces>
        <Cell $w={9} />
        <Tool $w={30} aria-label="More"><Chevrons /></Tool>
        <Sep $gap={0} />
        <Tool $w={31} aria-label="Settings"><svg width="19" height="12" viewBox="0 0 19 12"><rect width="19" height="12" rx="1" fill="#a8a8a8" /><circle cx="6" cy="6" r="2.500" fill="none" stroke="#232323" strokeWidth="2" strokeDasharray="1.800 .6" /><path d="M11 4h6M11 8h6M14 2v4M12.500 6.500v3" stroke="#232323" strokeWidth="1.400" /></svg></Tool>
        <HelpSearch><SearchField $h={19}><SearchGlyph /><input aria-label="Search Help" placeholder="Search Help" /></SearchField></HelpSearch>
      </Toolbar>

      <Upper>
        <ProjectPanel $focus>
          <Tabs $pad={24}>
            <Tab>Effect Controls (none)</Tab>
            <Tab $on $ml={52}>Project <Burger /></Tab>
          </Tabs>
          <SearchField $m="110px 5px 7px"><SearchGlyph menu /><input aria-label="Search project" /></SearchField>
          <HeaderRow>
            <Cell $w={15} />
            <Cell $line $grow $pad={4}>Name</Cell>
            <Cell $w={20}><svg width="11" height="6" viewBox="0 0 11 6"><path d="M0 6l5.500-6L11 6z" fill={BLUE} /></svg></Cell>
            <Cell $line $w={20}><FaTag size={11} color="#b4b4b4" /></Cell>
            <Cell $line $w={64} $pad={5}>Type<span>.</span></Cell>
          </HeaderRow>
          <FlowButton><Line w={13} h={13} c="#a8a8a8"><path d="M4.500.500h4v3h-4zM.500 9.500h3v3h-3zM9.500 9.500h3v3h-3z" fill="#a8a8a8" /><path d="M6.500 4v3M2 9V7h9v2" /></Line></FlowButton>
          <BottomBar>
            <Tool $w={24} $c="#a8a8a8" aria-label="Interpret"><Line w={17} h={12}><path d="M5.500.500h11v7h-11zM8 4.500h6M8 2.500h4M3.500 3v6.500h11" /><path d="M1 5v6.500h9" strokeWidth="2" strokeDasharray="2 1" /></Line></Tool>
            <Tool $w={24} $c="#a8a8a8" aria-label="New folder"><FaFolder size={13} /></Tool>
            <Tool $w={26} aria-label="New composition"><svg width="17" height="12" viewBox="0 0 17 12"><path d="M0 0h17v12H0z" fill="#b4b4b4" /><path d="M4 2h9v8H4z" fill="#333" /><circle cx="7" cy="4.500" r="2" fill="#2d8ceb" /><path d="M9 4h3v4H9z" fill="#e03a3a" /><path d="M5 9.500l3-4 2 4z" fill="#3ab54a" /><path d="M1.500 0v12M15.500 0v12" stroke="#222" strokeDasharray="1 1" /></svg></Tool>
            <Tool $w={23} $c="#666" aria-label="Acceleration"><FaRocket size={11} /><Line w={8} h={10} c="#a8a8a8"><path d="M4 0v5M2 3a3 3 0 104 0" /></Line></Tool>
            <Bpc>8 bpc<span>.</span></Bpc>
            <FaRegTrashAlt size={12} />
            <Pill />
          </BottomBar>
        </ProjectPanel>

        <CompPanel>
          <Tabs $pad={9}>
            <Tab $on><X c="#8a8a8a" s={5} /><FaLockOpen size={10} /><span>Composition <em>(none)</em></span><Burger /></Tab>
            <Tab $ml={33}>Footage (none)</Tab>
            <Tab $ml={70}>Layer (none)</Tab>
          </Tabs>
          <CompRule $m="24px 0 0" />
          <BottomBar>
            <Tool $w={24} aria-label="Preview"><Line w={13} h={11}><path d="M.5.500h8v6h-8zM10.500 3v5.500H3M12.500 5v5.500H6" /><path d="M3 2l3 1.500L3 5z" fill="currentColor" /></Line></Tool>
            <Tool $w={20} aria-label="Display"><Line w={12} h={11}><path d="M.5.500h11v7H.5zM6 8v2M3 10.500h6" /></Line></Tool>
            <Tool $w={24} aria-label="Mask"><svg width="15" height="12" viewBox="0 0 15 12" fill="currentColor" fillRule="evenodd"><path d="M0 1q7-2 15 0v3q-2 4-6 3L7.500 6 6 7Q2 8 0 4zM3 3v2h3V3zM9 3v2h3V3zM7 9h6l-3 3z" /></svg></Tool>
            <Tool $w={16} aria-label="Magnification">(4</Tool>
          </BottomBar>
        </CompPanel>

        <MidColumn>
          <InfoPanel>
            <PanelTitle>Info <Burger /></PanelTitle>
            <InfoGrid>
              <Swatch />
              <Readout $line $pad={6}>{"H :\nS :\nB :\nA :"}</Readout>
              <Readout $pad={9}><Line w={9} h={54} c="#a0a0a0"><path d="M4.500 24v9M0 28.500h9" /></Line></Readout>
              <Readout $pad={6}>{"X :\nY :"}</Readout>
            </InfoGrid>
            <Rule $m="0 9px 3px 6px" />
            <InfoText>Adding File:</InfoText>
            <InfoText $path>C:\Users\iibi0123\Downloads\hands-179</InfoText>
          </InfoPanel>
          <CharPanel>
            <PanelTitle>Character <Burger /></PanelTitle>
            <FontArea>
              <Pick label="Font" value="Headline R" dark split />
              <IconSlot $pad={5}><FaEyeDropper size={15} color="#a8a8a8" /></IconSlot>
              <ColorSlot>
                <svg width="45" height="43" viewBox="0 0 45 43"><rect x="13" y="13" width="30" height="30" fill="#000" /><path d="M23 32h9v-9" stroke="#232323" strokeWidth="3" fill="none" /><rect x=".5" y=".5" width="29" height="28" fill="#fff" stroke="#000" /><rect x="1.500" y="31" width="10" height="10" fill="#fff" stroke="#888" /><path d="M2 41l9-10" stroke="#d33" /><path d="M33 5h5v7M36 2l-4 3 4 3M35 9l3 4 3-4" stroke="#b4b4b4" strokeWidth="1.500" fill="none" /></svg>
              </ColorSlot>
              <Pick label="Font style" value="Regular" dark split />
              <IconSlot $pad={2}><svg width="20" height="17" viewBox="0 0 20 17"><rect x=".5" y=".5" width="19" height="16" fill="#fff" stroke="#aaa" /><path d="M1 1h18v7H1z" fill="#000" /><path d="M1 8.500h18" stroke="#999" /></svg></IconSlot>
            </FontArea>
            <Rule $m="6px 5px 0" />
            <Params>
              <IconSlot><LetterT $s={12}>T</LetterT><LetterT $s={19}>T</LetterT></IconSlot><Px v="30" u="px" /><Down />
              <IconSlot><Line w={16} h={17} c="#a8a8a8"><path d="M2.500 9v7M.500 11l2-2 2 2M.500 14l2 2 2-2M6 8.500h9M6 16.500h9M7 7.500l3.500-7 3.500 7M8.500 5h4M7 16l3.500-6 3.500 6M8.500 14h4" /></Line></IconSlot><Px v="89" u="px" /><Down />
              <KernIcon /><Value $dim>Metrics</Value><Down />
              <TrackIcon /><Px v="103" /><Down />
            </Params>
            <Rule $m="5px 5px 0" />
            <StrokeRow>
              <IconSlot $pad={1}><svg width="15" height="12" viewBox="0 0 15 12" stroke="#b4b4b4"><path d="M0 1h15" /><path d="M0 5.500h15" strokeWidth="2" /><path d="M0 10.500h15" strokeWidth="3" /></svg></IconSlot>
              <Px v="392" u="px" /><Down /><Pick label="Stroke order" value="Fill Over Stroke" dark />
            </StrokeRow>
            <Rule $m="3px 5px 2px" />
            <Params>
              <IconSlot><Line w={5} h={14} c="#b0b0b0"><path d="M2.500 1v12M.500 3l2-2 2 2M.500 11l2 2 2-2" /></Line><LetterT $s={19}>T</LetterT></IconSlot><Px v="408" u="%" /><Down />
              <WideIcon /><Px v="244" u="%" /><Down />
              <ShiftIcon /><Px v="35" u="px" /><Down />
              <TsumeIcon /><Px v="0" u="%" /><Down />
            </Params>
          </CharPanel>
          <ParaPanel>
            <PanelTitle>Paragraph <Burger /></PanelTitle>
            <AlignRow>
              {["l", "c", "r"].map(k => <Tool key={k} $on={k === "c"} $c={k === "c" ? BLUE : "#a8a8a8"} aria-label={`Align ${k}`}><Para kind={k} /></Tool>)}
              <AlignGap />
              {["jl", "jc", "jr"].map(k => <Tool key={k} $c="#a8a8a8" aria-label={`Justify ${k}`}><Para kind={k} /></Tool>)}
              <AlignGap />
              <Tool $c="#a8a8a8" aria-label="Justify all"><Para kind="jj" /></Tool>
            </AlignRow>
            <Rule $m="3px 19px 0 7px" />
            <ParaGrid>
              <IndentIcon kind={0} /><Px v="0" u="px" /><IndentIcon kind={1} /><Px v="62" u="px" /><IndentIcon kind={2} /><Px v="0" u="px" />
              <IndentIcon kind={3} /><Px v="0" u="px" /><IndentIcon kind={4} /><Px v="5" u="px" />
              <DirButtons>
                <Tool $on $w={22} $c={BLUE} aria-label="Left to right"><PilcrowDir /></Tool>
                <Tool $c="#a8a8a8" aria-label="Right to left"><PilcrowDir left /></Tool>
              </DirButtons>
            </ParaGrid>
          </ParaPanel>
        </MidColumn>

        <EffectsPanel>
          <Tabs $pad={11}>
            <Tab $on>Effects &amp; Presets <Burger /></Tab>
            <Tab $ml={21}>Align</Tab>
            <Sep $gap={3} />
            <Spacer />
            <Tool $w={18} aria-label="More panels"><Chevrons /></Tool>
          </Tabs>
          <SearchField $m="3px 4px 2px 6px"><SearchGlyph menu /><input aria-label="Search effects" /></SearchField>
          <ListArea>
            <EffectList>
              {effects.map(e => <li key={e}><Line w={4} h={8} c="#a0a0a0"><path d="M.5.500l3 3.500-3 3.500" /></Line>{e}</li>)}
            </EffectList>
            <Scroll />
          </ListArea>
          <BottomBar>
            <Spacer />
            <svg width="12" height="12" viewBox="0 0 12 12" fill="#b4b4b4"><path d="M0 0h12v12H6V6H0zM0 7h5v5z" /></svg>
            <Cell $w={24} />
          </BottomBar>
        </EffectsPanel>
      </Upper>

      <Timeline>
        <TimeLeft>
          <Tabs $pad={9}><Tab $gap={12}><X c="#8a8a8a" s={5} /><LightText>(none)</LightText><Burger /></Tab></Tabs>
          <SearchField $m="7px 30px 8px 109px"><SearchGlyph menu /><input aria-label="Search layers" /></SearchField>
          <HeaderRow>
            <Cell $w={4} />
            <Cell $w={15}><FaEye size={11} /></Cell><Cell $w={15}><FaVolumeUp size={12} /></Cell><Cell $w={14}><FaCircle size={7} /></Cell><Cell $w={19}><FaLock size={10} /></Cell>
            <Cell $line $w={33} $pad={15}><FaTag size={11} color="#b4b4b4" /></Cell>
            <Cell $line $w={33} $pad={5}>#<span>.</span></Cell>
            <Cell $line $w={204} $pad={5}>Source Name</Cell>
            <Cell $line $w={19}><Line w={11} h={10}><path d="M0 7.500h11M5.500 0v10M2 6c0-7 7-7 7 0M2 4h7" /></Line></Cell>
            <Cell $w={15}><Line w={10} h={10}><circle cx="5" cy="5" r="2" /><path d="M5 0v2M5 8v2M0 5h2M8 5h2M1.500 1.500l2 2M6.500 6.500l2 2M8.500 1.500l-2 2M3.500 6.500l-2 2" /></Line></Cell>
            <Cell $w={15}><Line w={10} h={10} sw={1.5}><path d="M0 1l9 8" strokeDasharray="3 1" /></Line></Cell>
            <Cell $w={15}><LetterFx>fx</LetterFx></Cell>
            <Cell $w={12}><Line w={10} h={11}><path d="M.500.500h9v10h-9zM3 0v11" /></Line></Cell>
          </HeaderRow>
          <Spacer />
          <BottomBar>
            <StatusIcons>
              <Line w={15} h={14} sw={1.2}><path d="M2 1h6v3M2 1v7h3M5 4h6v3M5 4v7h3M8 7h6v6H8zM11 8v4M9.500 10h3" /></Line>
              <Line w={15} h={14} sw={1.2}><path d="M8 10A4 4 0 116 2a4 4 0 014 3M7 6h6v6H7z" /></Line>
              <svg width="11" height="12" viewBox="0 0 11 12" fill="#8a8a8a"><path d="M3 0v12H2V8L0 6l2-2V0zM8 0v12h1V8l2-2-2-2V0zM4 0h3v12H4z" /></svg>
            </StatusIcons>
          </BottomBar>
        </TimeLeft>
        <TimeRight>
          <WorkBar />
          <Ruler>{Array.from({ length: 15 }, (_, i) => <span key={i} />)}</Ruler>
          <TrackArea />
          <ZoomRow>
            <svg width="10" height="6" viewBox="0 0 10 6" fill="currentColor"><path d="M0 6l5-6 5 6z" /></svg>
            <input type="range" aria-label="Timeline zoom" defaultValue={0} />
            <svg width="16" height="10" viewBox="0 0 16 10" fill="currentColor"><path d="M0 10l4-6 2 3 4-7 6 10z" /></svg>
          </ZoomRow>
        </TimeRight>
        <TimeGutter>
          <svg width="11" height="14" viewBox="0 0 11 14" fill="#444"><path d="M0 0h11v10l-5.500 4L0 10z" /></svg>
          <svg width="14" height="13" viewBox="0 0 14 13" stroke="#b4b4b4" fill="none" strokeWidth="1.500"><path d="M7 0L0 7h6" /><circle cx="7" cy="9" r="3" /><path d="M8 3h5v6h-2" fill="#b4b4b4" /></svg>
        </TimeGutter>
      </Timeline>

      <Taskbar>
        <Start aria-label="시작"><svg width="16" height="16" viewBox="0 0 16 16" fill="#fff"><path d="M0 2l7-1v6.500H0zM8 1l8-1v7.500H8zM0 8.500h7V15l-7-1zM8 8.500h8V16l-8-1z" /></svg></Start>
        <TaskSearch>
          <Line w={17} h={17} c="#222" sw={1.4}><circle cx="10.500" cy="6" r="5" /><path d="M7 10L1 16" /></Line>
          <input aria-label="검색" placeholder="검색하려면 여기에 입력하십시오." />
        </TaskSearch>
        <Tasks>
          {taskItems.map(([n, icon, open, active]) => <Task key={n} aria-label={n} $open={open} $active={active}>{icon}</Task>)}
        </Tasks>
        <Spacer />
        <Tray>
          <Line w={13} h={8} c="#fff" sw={1.3}><path d="M1 7l5.500-5.500L12 7" /></Line>
          <Line w={16} h={14} c="#fff" sw={1.2}><path d="M6 2h9v8H5M10 10v3M7 13h7M1 1h4v4H1zM3 5v8" /></Line>
          <Line w={16} h={14} c="#fff" sw={1.1}><path d="M1 5h2l4-4v12L3 9H1zM9 5a3 3 0 010 4M11 3a6 6 0 010 8" /><path d="M13 1a9 9 0 010 12" stroke="#888" /></Line>
          <Letter>A</Letter>
          <Clock>오후 12:34<br />2020-05-29</Clock>
        </Tray>
        <Tray>
          <Cell $w={10} />
          <Notice><svg width="17" height="17" viewBox="0 0 17 17"><path d="M0 0h17v14H8l-3 3v-3H0z" fill="#fff" /><path d="M3 4h11M3 7h11M3 10h7" stroke="#333" /></svg><span>1</span></Notice>
        </Tray>
      </Taskbar>

      <Dialog role="dialog" aria-label="Import File">
        <DTitle>
          <AeLogo size={16} /><span>Import File</span><Spacer /><button aria-label="닫기"><X c="#000" s={11} /></button>
        </DTitle>
        <NavRow>
          <NavButton $w={18} aria-label="뒤로"><NavArrow c="#777" /></NavButton>
          <NavButton $w={41} aria-label="앞으로"><NavArrowRight /></NavButton>
          <NavButton $w={9} aria-label="최근"><Chevron c="#777" size={7} /></NavButton>
          <NavButton $w={28} aria-label="위로"><NavArrow c="#666" up /></NavButton>
          <Address>
            <FolderSmall />
            <Crumbs><CrumbArrow /><a href="#pc">내 PC</a><CrumbArrow /><a href="#desktop">바탕 화면</a><CrumbArrow /><a href="#image">image</a><CrumbArrow /></Crumbs>
            <Spacer />
            <AddrButton aria-label="이전 위치"><Line w={10} h={7} c="#666" sw={1.8}><path d="M1 1l4 4 4-4" /></Line></AddrButton>
            <AddrButton $line aria-label="새로 고침"><Line w={11} h={12} c="#666" sw={1.7}><path d="M8 2.500A4.500 4.500 0 113 3M1 1h3.500v3.500" /></Line></AddrButton>
          </Address>
          <FileSearch><Line w={13} h={13} c="#777"><circle cx="8" cy="5" r="4" /><path d="M5 8L1 12" /></Line><input aria-label="image 검색" placeholder="image 검색" /></FileSearch>
        </NavRow>
        <Commands>
          <button>구성<Down $menu /></button>
          <Cell $w={32} />
          <button>새 폴더</button>
          <Spacer />
          <button aria-label="보기"><Picture w={14} h={11} /></button>
          <Cell $w={5} />
          <Down $menu />
          <Cell $w={22} />
          <button aria-label="미리 보기 창"><svg width="16" height="12" viewBox="0 0 16 12"><rect x=".5" y=".5" width="15" height="11" fill="#fff" stroke="#777" /><path d="M0 1h16M4.500 1v10" stroke="#777" /><path d="M9 2h6v9H9z" fill="#3a96dd" /></svg></button>
          <Cell $w={20} />
          <HelpBadge>?</HelpBadge>
        </Commands>
        <Body>
          <Tree>
            {tree.map(([i, t, l, gap, on], k) => <Node key={k} $lvl={l} $gap={gap} $on={on}><NodeIcon>{treeIcons[i]}</NodeIcon>{t}</Node>)}
          </Tree>
          <TreeScroll>
            <Line w={9} h={6} c="#505050" sw={2}><path d="M1 5l3.500-3.500L8 5" /></Line>
            <TreeThumb />
            <Line w={9} h={6} c="#505050" sw={2}><path d="M1 1l3.500 3.500L8 1" /></Line>
          </TreeScroll>
          <Files><FileTile><FolderBig />source</FileTile></Files>
        </Body>
        <Foot>
          <Options>
            <FieldCol>
              <label htmlFor="format">Format:</label><Pick id="format" label="Format" value="ImporterMultiStill" disabled />
              <label htmlFor="as">Import As:</label><Pick id="as" label="Import As" value="Footage" disabled />
            </FieldCol>
            <CheckCol>
              <Heading $dim>Sequence Options:</Heading>
              <Option $mt={4} $c="#6d6d6d"><LightBox type="checkbox" disabled /><span>Sequence not available</span></Option>
              <Option $mt={21} $c="#6d6d6d"><LightBox type="checkbox" disabled /><span>Force alphabetical order</span></Option>
              <Heading $mt={20}>Import Options:</Heading>
              <Option $mt={4} $c="#0a5fc4"><LightBox type="checkbox" /><span>Create Composition</span></Option>
            </CheckCol>
          </Options>
          <NameRow>
            <label htmlFor="fname">파일 이름(N):</label>
            <Combo><input id="fname" defaultValue="광해 예고편.00_01_27_12.Still001" /><Chevron c="#444" /></Combo>
            <TypeSlot><Pick label="파일 형식" value="All Acceptable Files" /></TypeSlot>
          </NameRow>
          <Actions>
            <RedFrame><Push $hot>Import Folder</Push></RedFrame>
            <Push $main $ml={8}>Import</Push>
            <Push $ml={14}>취소</Push>
          </Actions>
        </Foot>
        <SizeGrip><svg width="8" height="8" viewBox="0 0 8 8" fill="#bbb"><path d="M6 0h2v2H6zM6 3h2v2H6zM6 6h2v2H6zM3 3h2v2H3zM3 6h2v2H3zM0 6h2v2H0z" /></svg></SizeGrip>
      </Dialog>
    </Desktop>
  );
}
